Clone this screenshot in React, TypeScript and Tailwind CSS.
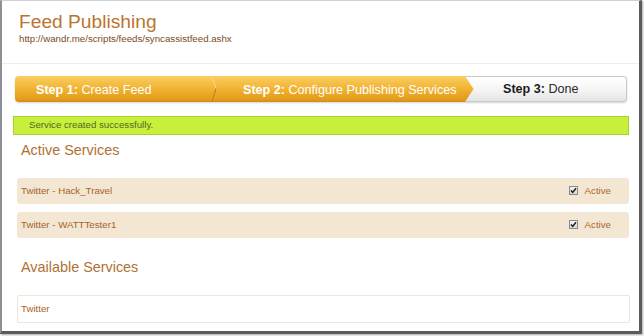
import React from 'react';

const font = "font-['Liberation_Sans',Arial,sans-serif]";

function CheckBox() {
  return (
    <svg width="9" height="9" viewBox="0 0 9 9" className="shrink-0">
      <defs>
        <linearGradient id="cbg" x1="0" y1="0" x2="0" y2="1">
          <stop offset="0" stopColor="#f4f4f4" />
          <stop offset="1" stopColor="#d6d6d6" />
        </linearGradient>
      </defs>
      <rect x="0.5" y="0.5" width="8" height="8" fill="url(#cbg)" stroke="#8a8a8a" />
      <path d="M2 4.6 L3.7 6.4 L7 2.3" fill="none" stroke="#1e1e1e" strokeWidth="1.5" />
    </svg>
  );
}

function ServiceRow({ name }: { name: string }) {
  return (
    <div className="ml-[15px] w-[612px] h-[26px] rounded-[3px] bg-[#f3e6d3] flex items-center justify-between pl-[4px] pr-[18px]">
      <span className="text-[9.7px] text-[#a5642c]">{name}</span>
      <span className="flex items-center gap-[7px]">
        <CheckBox />
        <span className="text-[9.7px] text-[#ad6a2c]">Active</span>
      </span>
    </div>
  );
}

export default function App() {
  return (
    <div className={`w-[644px] h-[336px] bg-white overflow-hidden ${font}`}>
      <div className="w-[642px] h-[334px] box-border bg-white border-t border-t-[#cfcfd4] border-l-2 border-l-[#8e8e96] border-r-[3px] border-r-[#5b5b5b] border-b-[3px] border-b-[#5b5b5b] shadow-[1px_1px_2px_rgba(0,0,0,0.35)] flex flex-col">
        {/* Header */}
        <div className="pt-[10px] pb-[18px] pl-[17px] border-b border-[#ececec]">
          <div className="text-[19.2px] leading-[22px] text-[#bb7430]">Feed Publishing</div>
          <div className="text-[9.7px] leading-[12px] text-[#7a4b24]">http://wandr.me/scripts/feeds/syncassistfeed.ashx</div>
        </div>

        {/* Steps */}
        <div className="mt-[12px] ml-[13px] w-[612px] h-[26px] flex rounded-[4px] shadow-[0_1px_2px_rgba(0,0,0,0.18)] text-[12.6px] leading-none">
          <div className="w-[450px] flex rounded-l-[4px] bg-[linear-gradient(to_bottom,#f8cf62,#f1b232_50%,#e29b18_92%,#cf8c14)] text-white">
            <div className="w-[196px] flex items-center pl-[21px] pt-[2px]">
              <b>Step 1:</b>&nbsp;Create Feed
            </div>
            <svg width="6" height="26" viewBox="0 0 6 26" className="shrink-0">
              <path d="M0.5 0.5 L5 12.5" stroke="#f9d98c" strokeWidth="1" fill="none" />
              <path d="M5 12.5 L1 25.5" stroke="#b97d12" strokeWidth="1" fill="none" />
            </svg>
            <div className="flex-1 flex items-center pl-[26px] pt-[2px]">
              <b>Step 2:</b>&nbsp;Configure Publishing Services
            </div>
          </div>
          <div className="flex-1 flex items-center rounded-r-[4px] border-y border-r border-[#cacaca] bg-[linear-gradient(to_bottom,#ffffff,#f6f6f6_50%,#e4e4e4)] text-[#2a2a2a]">
            <svg width="9" height="24" viewBox="0 0 9 24" className="shrink-0 -mt-px self-start h-[26px]" preserveAspectRatio="none">
              <defs>
                <linearGradient id="arr" x1="0" y1="0" x2="0" y2="1">
                  <stop offset="0" stopColor="#f8cf62" />
                  <stop offset="0.5" stopColor="#f1b232" />
                  <stop offset="1" stopColor="#d8921a" />
                </linearGradient>
              </defs>
              <polygon points="0,0 8.5,12 0,24" fill="url(#arr)" />
            </svg>
            <div className="pl-[29px] pt-[1px]">
              <b className="text-[#1c1c1c]">Step 3:</b>&nbsp;Done
            </div>
          </div>
        </div>

        {/* Message */}
        <div className="mt-[14px] ml-[11px] w-[616px] h-[19px] box-border border border-[#a7d22c] bg-[#c8f03b] flex items-center pl-[15px]">
          <span className="text-[9.7px] text-[#566626]">Service created successfully.</span>
        </div>

        {/* Active services */}
        <div className="mt-[7px] ml-[19px] text-[14.4px] leading-[17px] text-[#b07034]">Active Services</div>
        <div className="mt-[19px] flex flex-col gap-[8px]">
          <ServiceRow name="Twitter - Hack_Travel" />
          <ServiceRow name="Twitter - WATTTester1" />
        </div>

        {/* Available services */}
        <div className="mt-[21px] ml-[19px] text-[14.4px] leading-[17px] text-[#b07034]">Available Services</div>
        <div className="mt-[19px] ml-[15px] w-[613px] h-[28px] box-border border border-[#efe5d8] rounded-[2px] bg-white flex items-center pl-[3px]">
          <span className="text-[9.7px] text-[#a5642c]">Twitter</span>
        </div>
      </div>
    </div>
  );
}
